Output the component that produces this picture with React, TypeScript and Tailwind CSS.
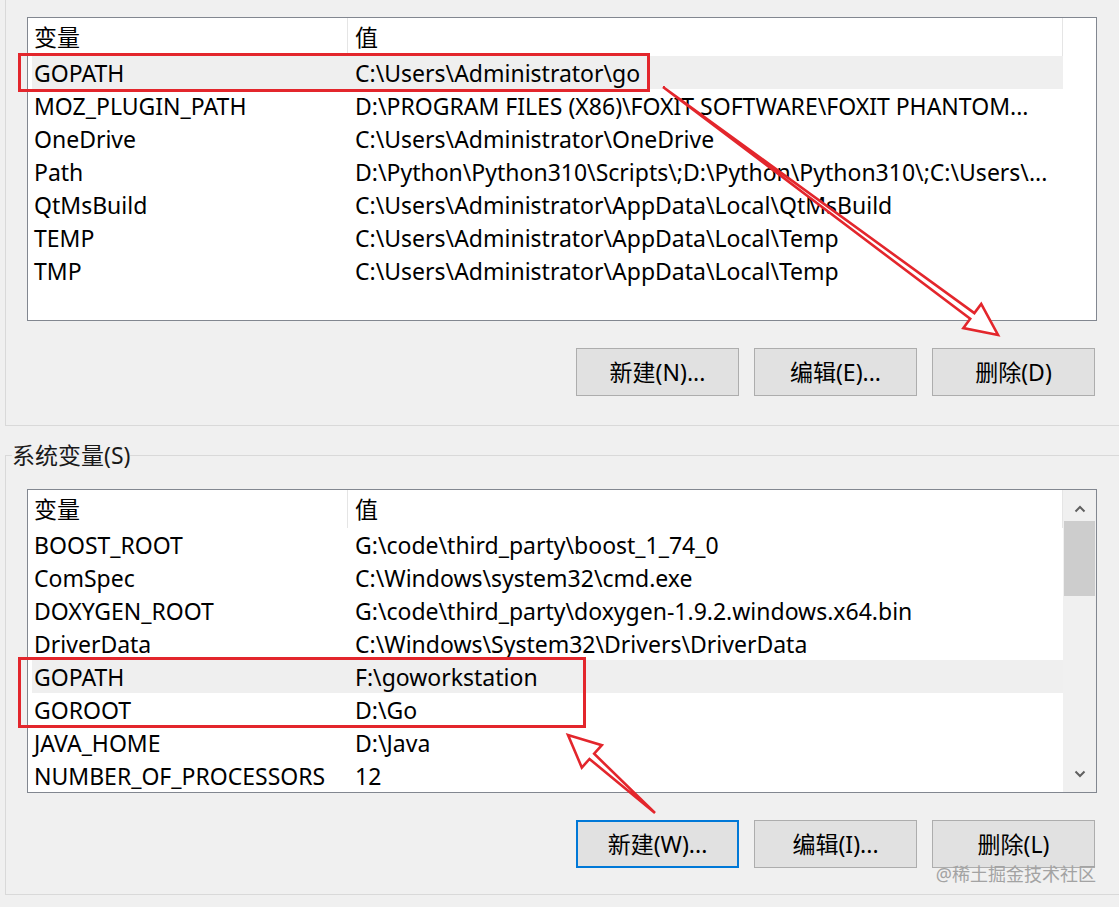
import React from "react";

type Row = [string, string];

const userVars: Row[] = [
  ["GOPATH", "C:\\Users\\Administrator\\go"],
  ["MOZ_PLUGIN_PATH", "D:\\PROGRAM FILES (X86)\\FOXIT SOFTWARE\\FOXIT PHANTOM..."],
  ["OneDrive", "C:\\Users\\Administrator\\OneDrive"],
  ["Path", "D:\\Python\\Python310\\Scripts\\;D:\\Python\\Python310\\;C:\\Users\\..."],
  ["QtMsBuild", "C:\\Users\\Administrator\\AppData\\Local\\QtMsBuild"],
  ["TEMP", "C:\\Users\\Administrator\\AppData\\Local\\Temp"],
  ["TMP", "C:\\Users\\Administrator\\AppData\\Local\\Temp"],
];

const sysVars: Row[] = [
  ["BOOST_ROOT", "G:\\code\\third_party\\boost_1_74_0"],
  ["ComSpec", "C:\\Windows\\system32\\cmd.exe"],
  ["DOXYGEN_ROOT", "G:\\code\\third_party\\doxygen-1.9.2.windows.x64.bin"],
  ["DriverData", "C:\\Windows\\System32\\Drivers\\DriverData"],
  ["GOPATH", "F:\\goworkstation"],
  ["GOROOT", "D:\\Go"],
  ["JAVA_HOME", "D:\\Java"],
  ["NUMBER_OF_PROCESSORS", "12"],
];

function arrowPoints(tx: number, ty: number, px: number, py: number) {
  const headLen = 32;
  const headHalf = 15;
  const shaftHalf = 3.5;
  const dx = px - tx;
  const dy = py - ty;
  const len = Math.hypot(dx, dy);
  const ux = dx / len;
  const uy = dy / len;
  const nx = -uy;
  const ny = ux;
  const bx = px - ux * headLen;
  const by = py - uy * headLen;
  const pts = [
    [tx, ty],
    [bx + nx * shaftHalf, by + ny * shaftHalf],
    [bx + nx * headHalf, by + ny * headHalf],
    [px, py],
    [bx - nx * headHalf, by - ny * headHalf],
    [bx - nx * shaftHalf, by - ny * shaftHalf],
  ];
  return pts.map((p) => p.join(",")).join(" ");
}

function ListView({ rows, selected, scroll }: { rows: Row[]; selected: number; scroll?: boolean }) {
  return (
    <div className="w-[1070px] h-[304px] bg-white border border-[#828790] flex overflow-hidden">
      <div className="w-[1035px] shrink-0 flex flex-col">
        <div className="h-[38px] flex items-center text-black shrink-0">
          <div className="w-[320px] h-full border-r border-[#e5e5e5] pl-[6px] leading-[38px]">变量</div>
          <div className="w-[715px] h-full border-r border-[#e5e5e5] pl-[7px] leading-[38px]">值</div>
        </div>
        {rows.map(([name, value], i) => (
          <div
            key={name + i}
            className={`h-[33px] shrink-0 flex ml-[4px] leading-[34px] whitespace-nowrap ${
              i === selected ? "bg-[#efefef]" : ""
            }`}
          >
            <div className="w-[316px] pl-[2px] overflow-hidden">{name}</div>
            <div className="w-[715px] pl-[7px] overflow-hidden">{value}</div>
          </div>
        ))}
      </div>
      {scroll && (
        <div className="w-[33px] shrink-0 bg-[#f0f0f0] flex flex-col items-center">
          <svg width="12" height="8" viewBox="0 0 12 8" className="mt-[15px]">
            <polyline points="1.5,6.5 6,2 10.5,6.5" fill="none" stroke="#606060" strokeWidth="2" />
          </svg>
          <div className="mt-[8px] w-[31px] h-[75px] bg-[#cdcdcd]" />
          <div className="flex-1" />
          <svg width="12" height="8" viewBox="0 0 12 8" className="mb-[14px]">
            <polyline points="1.5,1.5 6,6 10.5,1.5" fill="none" stroke="#606060" strokeWidth="2" />
          </svg>
        </div>
      )}
    </div>
  );
}

function Btn({ label, focused }: { label: string; focused?: boolean }) {
  return (
    <button
      className={`w-[163px] h-[48px] bg-[#e1e1e1] text-black text-[23px] ${
        focused ? "border-2 border-[#0078d7]" : "border border-[#adadad]"
      }`}
    >
      {label}
    </button>
  );
}

export default function App() {
  return (
    <div className="w-[1119px] h-[907px] bg-[#f0f0f0] relative overflow-hidden text-[23px] text-black font-['Noto_Sans','Noto_Sans_CJK_SC',sans-serif]">
      {/* 用户变量 */}
      <div className="ml-[5px] h-[426px] border-l border-b border-[#d9d9d9] pt-[17px] pl-[21px]">
        <ListView rows={userVars} selected={0} />
        <div className="mt-[27px] ml-[549px] flex gap-[15px]">
          <Btn label="新建(N)..." />
          <Btn label="编辑(E)..." />
          <Btn label="删除(D)" />
        </div>
      </div>

      {/* 系统变量 */}
      <fieldset className="ml-[5px] mt-[16px] w-[1200px] h-[453px] border border-[#d9d9d9]">
        <legend className="ml-[6px] text-[23px] leading-[26px] text-[#1a1a1a]">系统变量(S)</legend>
        <div className="mt-[21px] pl-[21px]">
          <ListView rows={sysVars} selected={4} scroll />
        </div>
        <div className="mt-[27px] ml-[570px] flex gap-[15px]">
          <Btn label="新建(W)..." focused />
          <Btn label="编辑(I)..." />
          <Btn label="删除(L)" />
        </div>
      </fieldset>

      {/* 标注 */}
      <div className="absolute left-[18px] top-[53px] w-[632px] h-[39px] border-[3px] border-[#e3262c]" />
      <div className="absolute left-[18px] top-[657px] w-[568px] h-[71px] border-[3px] border-[#e3262c]" />
      <svg className="absolute left-0 top-0 pointer-events-none" width="1119" height="907">
        <polygon points={arrowPoints(663, 87, 998, 335)} fill="white" stroke="#e3262c" strokeWidth="2.6" strokeLinejoin="miter" />
        <polygon points={arrowPoints(655, 813, 568, 735)} fill="white" stroke="#e3262c" strokeWidth="2.6" strokeLinejoin="miter" />
      </svg>
      <div className="absolute right-[23px] top-[862px] text-[18px] leading-[24px] text-[#a3a3a3]">@稀土掘金技术社区</div>
    </div>
  );
}
